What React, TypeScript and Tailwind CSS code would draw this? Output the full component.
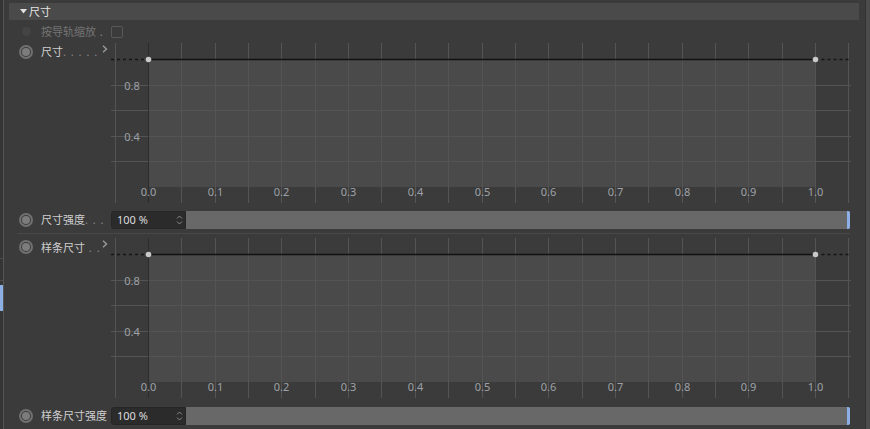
const FONT = { fontFamily: '"Noto Sans", "Noto Sans CJK SC", sans-serif' };

const X = (v: number) => Math.round(37 + 667 * v) + 0.5;
const Y = (v: number) => Math.round(17 + (1 - v) * 128) + 0.5;

const gridXs = Array.from({ length: 23 }, (_, k) => -0.05 + 0.05 * k);
const gridYs = [0.8, 0.6, 0.4, 0.2];
const tickXs = [0, 0.1, 0.2, 0.3, 0.4, 0.5, 0.6, 0.7, 0.8, 0.9, 1.0];

const Radio = ({ disabled }: { disabled?: boolean }) =>
  disabled ? (
    <div className="w-[14px] h-[14px] flex items-center justify-center">
      <div className="w-[9px] h-[9px] rounded-full bg-[#444444]" />
    </div>
  ) : (
    <div className="w-[14px] h-[14px] rounded-full bg-[#707070] flex items-center justify-center">
      <div className="w-[10px] h-[10px] rounded-full bg-[#3e3e3e] flex items-center justify-center">
        <div className="w-[8px] h-[8px] rounded-full bg-[#7c7c7c]" />
      </div>
    </div>
  );

const Label = ({ text, dots, dim }: { text: string; dots?: string; dim?: boolean }) => (
  <div className="flex items-center">
    <div className="ml-[10px]">
      <Radio disabled={dim} />
    </div>
    <span
      className={`ml-[8px] text-[11px] leading-none whitespace-nowrap ${
        dim ? "text-[#747474]" : "text-[#cfcfcf]"
      }`}
    >
      {text}
      {dots && <span className="text-[#8a8a8a] tracking-[1px]">{dots}</span>}
    </span>
  </div>
);

const Chevron = () => (
  <svg width="6" height="8" viewBox="0 0 6 8" className="mr-[3px] mb-[6px]">
    <path d="M1 0.8 L4.5 4 L1 7.2" stroke="#9a9a9a" strokeWidth="1.4" fill="none" />
  </svg>
);

const Graph = () => (
  <svg width="741" height="162" className="block" style={FONT}>
    <rect x={X(0) - 0.5} y={Y(1) - 0.5} width={X(1) - X(0)} height={Y(0) - Y(1)} fill="#4a4a4a" />
    {gridYs.map((v) => (
      <line key={v} x1="0" x2="740" y1={Y(v)} y2={Y(v)} stroke="#545454" />
    ))}
    {gridXs.map((v, i) => (
      <line
        key={i}
        x1={X(v)}
        x2={X(v)}
        y1="1"
        y2="161"
        stroke={i === 1 ? "#2c2c2c" : "#545454"}
      />
    ))}
    <line x1="0" x2={X(0)} y1="17.5" y2="17.5" stroke="#151515" strokeWidth="1.3" strokeDasharray="3 3" />
    <line x1={X(1)} x2="740" y1="17.5" y2="17.5" stroke="#151515" strokeWidth="1.3" strokeDasharray="3 3" />
    <line x1={X(0)} x2={X(1)} y1="17.5" y2="17.5" stroke="#111111" strokeWidth="1.4" />
    <circle cx={X(0)} cy="17.5" r="2.8" fill="#c9c9c9" />
    <circle cx={X(1)} cy="17.5" r="2.8" fill="#c9c9c9" />
    <text x="21" y={Y(0.8) + 4} fontSize="11" fill="#9ea2a8" textAnchor="middle">
      0.8
    </text>
    <text x="21" y={Y(0.4) + 4} fontSize="11" fill="#9ea2a8" textAnchor="middle">
      0.4
    </text>
    {tickXs.map((v) => (
      <text key={v} x={X(v)} y="154" fontSize="11" fill="#9ea2a8" textAnchor="middle">
        {v.toFixed(1)}
      </text>
    ))}
  </svg>
);

const Strength = ({ text, dots }: { text: string; dots?: string }) => (
  <div className="flex items-center h-[30px] pt-[3px]">
    <div className="w-[102px]">
      <Label text={text} dots={dots} />
    </div>
    <div className="w-[75px] h-[18px] rounded-l-[3px] bg-[#2b2b2b] border border-[#262626] flex items-center justify-between pl-[5px] pr-[2px]">
      <span className="text-[11px] text-[#dcdcdc] leading-none">100 %</span>
      <svg width="7" height="12" viewBox="0 0 7 12">
        <path d="M1 4.5 L3.5 2 L6 4.5 M1 7.5 L3.5 10 L6 7.5" stroke="#8a8a8a" strokeWidth="1" fill="none" />
      </svg>
    </div>
    <div className="flex-1 mr-[9px] h-[18px] bg-[#686868] rounded-r-[2px] flex justify-end">
      <div className="w-[3px] h-full bg-[#8cb0e6] rounded-r-[2px]" />
    </div>
  </div>
);

const Section = ({ name, dots, strength, strengthDots }: { name: string; dots: string; strength: string; strengthDots?: string }) => (
  <>
    <div className="flex">
      <div className="w-[102px] h-[162px]">
        <div className="h-[20px] flex items-center justify-between">
          <Label text={name} dots={dots} />
          <Chevron />
        </div>
      </div>
      <Graph />
    </div>
    <Strength text={strength} dots={strengthDots} />
  </>
);

export default function App() {
  return (
    <div className="w-[870px] h-[429px] overflow-hidden bg-[#3b3b3b] flex" style={FONT}>
      <div className="w-[4px] h-full bg-[#353535] border-r border-[#555555] flex flex-col">
        <div className="h-[258px]" />
        <div className="h-[23px] w-[3px] border-y border-[#4c4c4c]" />
        <div className="h-[4px]" />
        <div className="h-[26px] w-[3px] bg-[#8cb0e6]" />
      </div>

      <div className="flex-1 pl-[5px] pr-[6px] flex flex-col">
        <div className="mt-[3px] h-[17px] bg-[#4a4a4a] flex items-center pl-[11px]">
          <svg width="7" height="5" viewBox="0 0 7 5">
            <path d="M0 0 L7 0 L3.5 4.5 Z" fill="#e0e0e0" />
          </svg>
          <span className="ml-[2px] text-[11px] text-[#e2e2e2] leading-none">尺寸</span>
        </div>

        <div className="h-[22px] pt-[2px] flex items-center">
          <div className="w-[102px]">
            <Label text="按导轨缩放" dots=" ." dim />
          </div>
          <div className="w-[12px] h-[12px] rounded-[2px] border border-[#595959]" />
        </div>

        <Section name="尺寸" dots=". . . . ." strength="尺寸强度" strengthDots=". . ." />

        <div className="h-px bg-[#484848] ml-[8px] mr-[9px]" />
        <div className="h-[3px]" />

        <Section name="样条尺寸" dots=" . ." strength="样条尺寸强度" />
      </div>

      <div className="w-[5px] h-full bg-[#4c4c4c] border-l border-[#333333]" />
    </div>
  );
}
